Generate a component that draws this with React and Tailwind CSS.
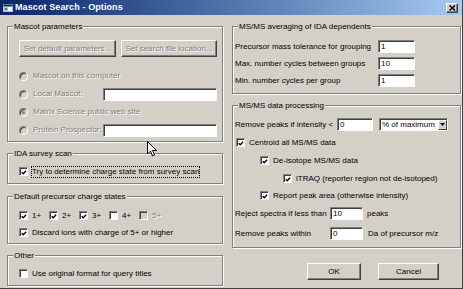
import React from "react";

const DIS = "text-[#808080] [text-shadow:1px_1px_0_#fff]";

function Check({ checked, disabled }) {
  return (
    <span
      className={`flex items-center justify-center w-[9px] h-[9px] shrink-0 border border-t-[#808080] border-l-[#808080] border-b-white border-r-white shadow-[inset_1px_1px_0_#404040] ${
        disabled ? "bg-[#d4d0c8]" : "bg-white"
      }`}
    >
      {checked && (
        <svg width="7" height="7" viewBox="0 0 7 7" className="ml-[1px] mt-[1px]">
          <path d="M0.8 3.2 L2.6 5 L6 1.4" stroke="#000" strokeWidth="1.5" fill="none" />
        </svg>
      )}
    </span>
  );
}

function Radio({ selected }) {
  return (
    <span className="flex items-center justify-center w-[9px] h-[9px] shrink-0 rounded-full border border-t-[#808080] border-l-[#808080] border-b-white border-r-white bg-[#d4d0c8] shadow-[inset_1px_1px_0_#404040]">
      {selected && <span className="w-[3px] h-[3px] rounded-full bg-[#808080]" />}
    </span>
  );
}

function Field({ className, value }) {
  return (
    <div
      className={`h-[13px] shrink-0 bg-white border border-t-[#808080] border-l-[#808080] border-b-white border-r-white shadow-[inset_1px_1px_0_#404040] pl-[2px] flex items-center leading-none ${className}`}
    >
      {value}
    </div>
  );
}

function Btn({ className, children, disabled }) {
  return (
    <div
      className={`h-[17px] shrink-0 flex items-center justify-center border border-t-white border-l-white border-b-[#404040] border-r-[#404040] shadow-[inset_-1px_-1px_0_#808080] ${
        disabled ? DIS : "text-black"
      } ${className}`}
    >
      {children}
    </div>
  );
}

function Group({ title, className, children }) {
  return (
    <div
      className={`flex flex-col shrink-0 border border-[#808080] shadow-[inset_1px_1px_0_#fff,1px_1px_0_#fff] ${className}`}
    >
      <div className="-mt-[5px] ml-[5px] px-[1px] w-fit h-[9px] leading-[9px] bg-[#d4d0c8]">{title}</div>
      {children}
    </div>
  );
}

function CheckRow({ className, checked, disabled, label }) {
  return (
    <div className={`flex items-center h-[13px] ${className}`}>
      <Check checked={checked} disabled={disabled} />
      <span className={`ml-[4px] whitespace-nowrap ${disabled ? DIS : ""}`}>{label}</span>
    </div>
  );
}

export default function App() {
  return (
    <div className="relative w-[463px] h-[289px] overflow-hidden bg-[#d4d0c8] text-[8px] text-black font-['Liberation_Sans',Arial,sans-serif] border-r border-b border-r-[#404040] border-b-[#404040] flex flex-col">
      {/* Title bar */}
      <div className="h-[15px] shrink-0 flex items-center bg-gradient-to-r from-[#0a246a] to-[#a6caf0]">
        <svg width="10" height="10" viewBox="0 0 10 10" className="ml-[3px]">
          <rect x="0.5" y="1.5" width="9" height="7" fill="#fff" stroke="#c0c0c0" />
          <rect x="0.5" y="1.5" width="9" height="2" fill="#0a246a" />
          <rect x="1.5" y="4.5" width="3" height="3" fill="#3a8a8a" />
        </svg>
        <span className="ml-[2px] text-white font-bold text-[9px] leading-none tracking-[0.1px]">Mascot Search - Options</span>
        <div className="ml-auto mr-[4px] w-[12px] h-[10px] flex items-center justify-center bg-[#d4d0c8] border border-t-white border-l-white border-b-[#404040] border-r-[#404040] shadow-[inset_-1px_-1px_0_#808080]">
          <svg width="7" height="6" viewBox="0 0 7 6">
            <path d="M0.5 0.5 L6 5.5 M6 0.5 L0.5 5.5" stroke="#000" strokeWidth="1.5" />
          </svg>
        </div>
      </div>

      <div className="flex flex-row pt-[11px]">
        {/* Left column */}
        <div className="ml-[7px] w-[216px] flex flex-col">
          <Group title="Mascot parameters" className="h-[116px]">
            <div className="flex mt-[9px] ml-[11px] gap-[5px]">
              <Btn disabled className="w-[97px]">Set default parameters...</Btn>
              <Btn disabled className="w-[96px]">Set search file location...</Btn>
            </div>
            <div className="flex flex-col mt-[10px]">
              <div className="flex items-center h-[18px] ml-[11px]">
                <Radio />
                <span className={`ml-[5px] ${DIS}`}>Mascot on this computer</span>
              </div>
              <div className="flex items-center h-[18px] ml-[11px]">
                <Radio />
                <span className={`ml-[5px] w-[70px] ${DIS}`}>Local Mascot:</span>
                <Field className="w-[114px]" value="" />
              </div>
              <div className="flex items-center h-[18px] ml-[11px]">
                <Radio selected />
                <span className={`ml-[5px] ${DIS}`}>Matrix Science public web site</span>
              </div>
              <div className="flex items-center h-[18px] ml-[11px]">
                <Radio />
                <span className={`ml-[5px] w-[70px] ${DIS}`}>Protein Prospector:</span>
                <Field className="w-[114px]" value="" />
              </div>
            </div>
          </Group>

          <Group title="IDA survey scan" className="h-[31px] mt-[11px]">
            <div className="flex items-center h-[13px] mt-[7px] ml-[11px]">
              <Check checked />
              <span className="ml-[3px] px-[1px] h-[12px] flex items-center outline outline-1 outline-dotted outline-black -outline-offset-1 whitespace-nowrap">
                Try to determine charge state from survey scan
              </span>
            </div>
          </Group>

          <Group title="Default precursor charge states" className="h-[48px] mt-[12px]">
            <div className="flex h-[13px] mt-[8px] ml-[11px]">
              <CheckRow className="w-[30px]" checked label="1+" />
              <CheckRow className="w-[30px]" checked label="2+" />
              <CheckRow className="w-[30px]" checked label="3+" />
              <CheckRow className="w-[30px]" label="4+" />
              <CheckRow className="w-[30px]" disabled label="5+" />
            </div>
            <CheckRow className="mt-[4px] ml-[11px]" checked label="Discard ions with charge of 5+ or higher" />
          </Group>

          <Group title="Other" className="h-[31px] mt-[11px]">
            <CheckRow className="mt-[7px] ml-[11px]" label="Use original format for query titles" />
          </Group>
        </div>

        {/* Right column */}
        <div className="ml-[9px] w-[229px] flex flex-col">
          <Group title="MS/MS averaging of IDA dependents" className="h-[68px]">
            <div className="flex items-center h-[13px] mt-[9px] ml-[2px]">
              <span className="w-[143px]">Precursor mass tolerance for grouping</span>
              <Field className="w-[37px]" value="1" />
            </div>
            <div className="flex items-center h-[13px] mt-[4px] ml-[2px]">
              <span className="w-[143px]">Max. number cycles between groups</span>
              <Field className="w-[37px]" value="10" />
            </div>
            <div className="flex items-center h-[13px] mt-[4px] ml-[2px]">
              <span className="w-[143px]">Min. number cycles per group</span>
              <Field className="w-[37px]" value="1" />
            </div>
          </Group>

          <Group title="MS/MS data processing" className="h-[143px] mt-[11px]">
            <div className="flex items-center h-[13px] mt-[8px] ml-[2px]">
              <span className="w-[102px]">Remove peaks if intensity &lt;</span>
              <Field className="w-[36px]" value="0" />
              <div className="ml-[6px] w-[69px] h-[13px] bg-white border border-t-[#808080] border-l-[#808080] border-b-white border-r-white shadow-[inset_1px_1px_0_#404040] flex items-center">
                <span className="pl-[2px] flex-1">% of maximum</span>
                <div className="w-[9px] h-[10px] mr-[0px] flex items-center justify-center bg-[#d4d0c8] border border-t-white border-l-white border-b-[#404040] border-r-[#404040]">
                  <svg width="5" height="3" viewBox="0 0 5 3">
                    <path d="M0 0 H5 L2.5 3 Z" fill="#000" />
                  </svg>
                </div>
              </div>
            </div>
            <CheckRow className="mt-[5px] ml-[3px]" checked label="Centroid all MS/MS data" />
            <CheckRow className="mt-[5px] ml-[27px]" checked label="De-isotope MS/MS data" />
            <CheckRow className="mt-[5px] ml-[50px]" checked label="iTRAQ (reporter region not de-isotoped)" />
            <CheckRow className="mt-[4px] ml-[27px]" checked label="Report peak area (otherwise intensity)" />
            <div className="flex items-center h-[13px] mt-[5px] ml-[2px]">
              <span className="w-[95px]">Reject spectra if less than</span>
              <Field className="w-[33px]" value="10" />
              <span className="ml-[4px]">peaks</span>
            </div>
            <div className="flex items-center h-[13px] mt-[7px] ml-[2px]">
              <span className="w-[95px]">Remove peaks within</span>
              <Field className="w-[33px]" value="0" />
              <span className="ml-[5px]">Da of precursor m/z</span>
            </div>
          </Group>

          <div className="flex mt-[15px]">
            <Btn className="ml-[75px] w-[54px]">OK</Btn>
            <Btn className="ml-[17px] w-[61px]">Cancel</Btn>
          </div>
        </div>
      </div>

      {/* Mouse cursor overlay */}
      <svg className="absolute left-[147px] top-[141px]" width="11" height="17" viewBox="0 0 11 17">
        <path d="M0.5 0.5 L0.5 13 L3.5 10 L5.5 15 L7.5 14 L5.5 9.5 L9.5 9.5 Z" fill="#fff" stroke="#000" strokeWidth="1" strokeLinejoin="miter" />
      </svg>
    </div>
  );
}
